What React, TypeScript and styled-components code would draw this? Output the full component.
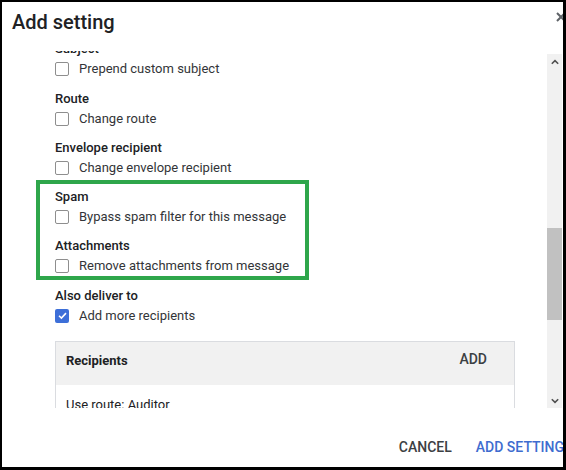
import { useLayoutEffect, useRef } from "react";
import styled, { createGlobalStyle } from "styled-components";

const GlobalStyle = createGlobalStyle`
  html, body {
    margin: 0;
    padding: 0;
    background: #000;
  }
  * {
    box-sizing: border-box;
  }
`;

interface Option {
  label: string;
  checked?: boolean;
}

interface Group {
  title: string;
  options: Option[];
}

const upperGroups: Group[] = [
  {
    title: "Headers",
    options: [
      { label: "Add X-Gm-Original-To header" },
      { label: "Add X-Gm-Spam and X-Gm-Phishy headers" },
      { label: "Add custom headers" },
    ],
  },
  { title: "Subject", options: [{ label: "Prepend custom subject" }] },
  { title: "Route", options: [{ label: "Change route" }] },
  { title: "Envelope recipient", options: [{ label: "Change envelope recipient" }] },
];

const highlighted: Group[] = [
  { title: "Spam", options: [{ label: "Bypass spam filter for this message" }] },
  { title: "Attachments", options: [{ label: "Remove attachments from message" }] },
];

const lowerGroups: Group[] = [
  { title: "Also deliver to", options: [{ label: "Add more recipients", checked: true }] },
];

function SettingGroup({ group }: { group: Group }) {
  return (
    <GroupBox>
      <GroupTitle>{group.title}</GroupTitle>
      {group.options.map((o) => (
        <OptionRow key={o.label}>
          <Box $checked={!!o.checked}>
            {o.checked && (
              <svg width="11" height="11" viewBox="0 0 12 12">
                <path d="M2.2 6.3 L4.8 8.8 L9.8 3.4" fill="none" stroke="#fff" strokeWidth="1.7" />
              </svg>
            )}
          </Box>
          <OptionText>{o.label}</OptionText>
        </OptionRow>
      ))}
    </GroupBox>
  );
}

export default function App() {
  const areaRef = useRef<HTMLDivElement>(null);
  const subjectRef = useRef<HTMLDivElement>(null);

  useLayoutEffect(() => {
    if (areaRef.current && subjectRef.current) {
      areaRef.current.scrollTop = subjectRef.current.offsetTop + 11.5;
    }
  }, []);

  return (
    <>
      <GlobalStyle />
      <Frame>
        <Dialog>
          <Header>
            <Title>Add setting</Title>
            <CloseButton aria-label="Close">
              <svg width="12" height="12" viewBox="0 0 12 12">
                <path d="M2 2 L10 10 M10 2 L2 10" stroke="#5f6368" strokeWidth="2" />
              </svg>
            </CloseButton>
          </Header>

          <Body>
            <ScrollArea ref={areaRef}>
              <Content>
                {upperGroups.map((g) =>
                  g.title === "Subject" ? (
                    <div key={g.title} ref={subjectRef}>
                      <SettingGroup group={g} />
                    </div>
                  ) : (
                    <SettingGroup key={g.title} group={g} />
                  )
                )}
                <Highlight>
                  {highlighted.map((g) => (
                    <SettingGroup key={g.title} group={g} />
                  ))}
                </Highlight>
                {lowerGroups.map((g) => (
                  <SettingGroup key={g.title} group={g} />
                ))}

                <Table>
                  <TableHead>
                    <HeadTitle>Recipients</HeadTitle>
                    <AddLink>ADD</AddLink>
                  </TableHead>
                  <TableRow>Use route: Auditor</TableRow>
                  <TableRow>Use route: Archive</TableRow>
                </Table>
              </Content>
            </ScrollArea>

            <Scrollbar>
              <Arrow>
                <svg width="8" height="6" viewBox="0 0 8 6">
                  <path d="M0.8 4.8 L4 1.6 L7.2 4.8" fill="none" stroke="#505050" strokeWidth="1.6" />
                </svg>
              </Arrow>
              <Rail>
                <Thumb />
              </Rail>
              <Arrow>
                <svg width="8" height="6" viewBox="0 0 8 6">
                  <path d="M0.8 1.2 L4 4.4 L7.2 1.2" fill="none" stroke="#505050" strokeWidth="1.6" />
                </svg>
              </Arrow>
            </Scrollbar>
          </Body>

          <Footer>
            <FooterButton>CANCEL</FooterButton>
            <FooterButton $primary>ADD SETTING</FooterButton>
          </Footer>
        </Dialog>
      </Frame>
    </>
  );
}

const Frame = styled.div`
  width: 566px;
  height: 470px;
  padding: 2px 3px 3px 2px;
  background: #000;
`;

const Dialog = styled.div`
  width: 100%;
  height: 100%;
  background: #fff;
  overflow: hidden;
  display: flex;
  flex-direction: column;
  font-family: Roboto, "Liberation Sans", Arial, sans-serif;
`;

const Header = styled.div`
  position: relative;
  height: 49px;
  flex-shrink: 0;
  padding: 8px 0 0 10px;
`;

const Title = styled.h1`
  margin: 0;
  font-size: 20px;
  line-height: 24px;
  font-weight: 500;
  color: #202124;
`;

const CloseButton = styled.button`
  position: absolute;
  top: 8px;
  right: -5px;
  width: 14px;
  height: 14px;
  padding: 0;
  border: none;
  background: none;
  display: flex;
  align-items: center;
  justify-content: center;
`;

const Body = styled.div`
  height: 357px;
  flex-shrink: 0;
  display: flex;
`;

const ScrollArea = styled.div`
  position: relative;
  flex: 1;
  overflow: hidden;
`;

const Content = styled.div`
  display: flex;
  flex-direction: column;
  gap: 9.25px;
  padding: 0 30px 20px 53px;
`;

const GroupBox = styled.div`
  display: flex;
  flex-direction: column;
`;

const GroupTitle = styled.div`
  height: 20px;
  line-height: 20px;
  font-size: 13px;
  font-weight: 500;
  color: #202124;
`;

const OptionRow = styled.label`
  height: 20px;
  display: flex;
  align-items: center;
  gap: 10px;
`;

const Box = styled.span<{ $checked: boolean }>`
  width: 14px;
  height: 14px;
  border-radius: 2px;
  display: flex;
  align-items: center;
  justify-content: center;
  flex-shrink: 0;
  border: ${(p) => (p.$checked ? "none" : "1.5px solid #8e8e8e")};
  background: ${(p) => (p.$checked ? "#3d6fd8" : "#fff")};
`;

const OptionText = styled.span`
  font-size: 13px;
  color: #333538;
  line-height: 20px;
`;

const Highlight = styled.div`
  display: flex;
  flex-direction: column;
  gap: 9.25px;
  width: 273px;
  margin: -7px 0 -4px -19px;
  padding: 3px 0 0 15px;
  border: 4px solid #2ea64b;
`;

const Table = styled.div`
  margin-top: 6.5px;
  width: 460px;
  border: 1px solid #dadce0;
`;

const TableHead = styled.div`
  height: 43px;
  background: #f1f1f1;
  display: flex;
  align-items: flex-start;
  justify-content: space-between;
  padding: 0 27px 0 10px;
`;

const HeadTitle = styled.div`
  font-size: 13px;
  line-height: 20px;
  font-weight: 700;
  color: #202124;
  padding-top: 9px;
`;

const AddLink = styled.div`
  font-size: 14px;
  line-height: 20px;
  font-weight: 500;
  color: #3c4043;
  padding-top: 7px;
`;

const TableRow = styled.div`
  padding: 10px 10px;
  font-size: 13px;
  line-height: 20px;
  color: #202124;
`;

const Scrollbar = styled.div`
  width: 15px;
  margin: 3px 1px 0 0;
  background: #f1f1f1;
  display: flex;
  flex-direction: column;
`;

const Arrow = styled.div`
  height: 15px;
  display: flex;
  align-items: center;
  justify-content: center;
  flex-shrink: 0;
`;

const Rail = styled.div`
  flex: 1;
  display: flex;
  flex-direction: column;
`;

const Thumb = styled.div`
  margin-top: 159px;
  height: 92px;
  background: #c1c1c1;
`;

const Footer = styled.div`
  flex: 1;
  display: flex;
  justify-content: flex-end;
  align-items: flex-start;
  gap: 24px;
  padding-top: 29px;
  margin-right: -1px;
`;

const FooterButton = styled.button<{ $primary?: boolean }>`
  padding: 0;
  border: none;
  background: none;
  font-family: Roboto, "Liberation Sans", Arial, sans-serif;
  font-size: 14px;
  font-weight: 500;
  line-height: 20px;
  white-space: nowrap;
  color: ${(p) => (p.$primary ? "#3e6ccf" : "#3c4043")};
`;
